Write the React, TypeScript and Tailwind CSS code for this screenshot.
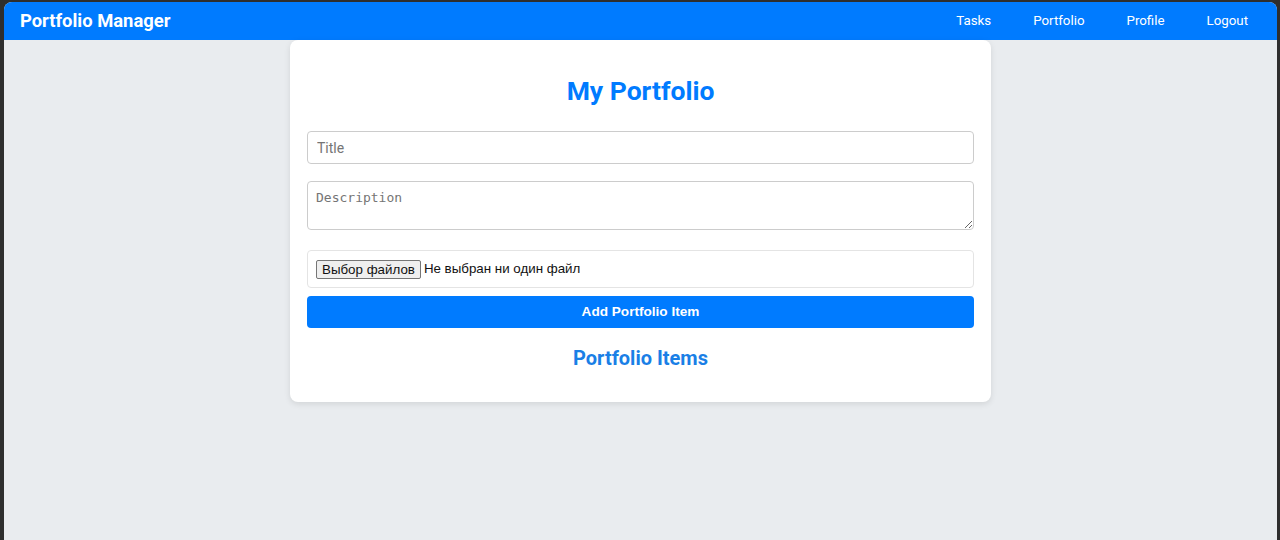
import React, { useState } from 'react';

const App: React.FC = () => {
  const [title, setTitle] = useState('');
  const [description, setDescription] = useState('');

  const handleSubmit = (e: React.FormEvent) => {
    e.preventDefault();
  };

  return (
    <div className="min-h-screen bg-[#2e2e2e] pl-[4px] pr-[3px] pt-[2px]">
      <div className="min-h-[538px] bg-[#e9ecef] rounded-t-[8px] overflow-hidden font-['Roboto',sans-serif]">
        {/* navbar */}
        <nav className="h-[38px] bg-[#007bff] flex items-center justify-between pl-[16px] pr-[29px] text-white">
          <span className="text-[18.4px] font-bold">Portfolio Manager</span>
          <div className="flex gap-[42px] text-[13.3px]">
            <a href="#">Tasks</a>
            <a href="#">Portfolio</a>
            <a href="#">Profile</a>
            <a href="#">Logout</a>
          </div>
        </nav>

        <div className="w-[701px] ml-[286px] bg-white rounded-[8px] shadow-[0_2px_6px_rgba(0,0,0,0.1)] px-[17px] pt-[36px] pb-[32px]">
          <h2 className="text-center text-[26.5px] font-bold text-[#007bff] leading-[30px] mb-[25px]">My Portfolio</h2>

          <form onSubmit={handleSubmit} className="flex flex-col">
            <input
              type="text"
              placeholder="Title"
              value={title}
              onChange={(e) => setTitle(e.target.value)}
              className="h-[33px] border border-[#cccccc] rounded-[4px] px-[9px] text-[14px] placeholder:text-[#757575] outline-none"
            />
            <textarea
              placeholder="Description"
              value={description}
              onChange={(e) => setDescription(e.target.value)}
              className="mt-[17px] h-[49px] border border-[#cccccc] rounded-[4px] px-[8px] py-[6px] text-[13px] font-['DejaVu_Sans_Mono',monospace] placeholder:text-[#757575] outline-none"
            />
            <div className="mt-[20px] h-[38px] border border-[#e4e4e4] rounded-[4px] flex items-center px-[8px] gap-[3px] font-['Liberation_Sans',Arial,sans-serif] text-[13.33px] text-[#111]">
              <button
                type="button"
                className="bg-[#efefef] border border-[#767676] rounded-[2px] px-[5px] h-[19px] leading-[17px]"
              >
                Выбор файлов
              </button>
              <span>Не выбран ни один файл</span>
            </div>
            <button
              type="submit"
              className="mt-[8px] h-[32px] bg-[#007bff] rounded-[4px] text-white text-[13.6px] font-bold font-['Liberation_Sans',Arial,sans-serif]"
            >
              Add Portfolio Item
            </button>
          </form>

          <h3 className="text-center text-[20px] font-bold text-[#1a7fe6] mt-[18px] leading-[24px]">Portfolio Items</h3>
        </div>
      </div>
    </div>
  );
};

export default App;
